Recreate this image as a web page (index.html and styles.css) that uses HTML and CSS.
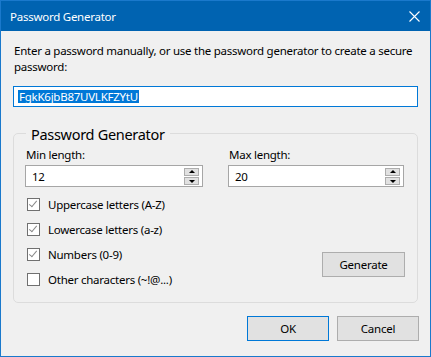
FILE: index.html
```html
<!DOCTYPE html>
<html lang="en">
<head>
    <meta charset="UTF-8">
    <title>Password Generator</title>
    <link rel="stylesheet" href="styles.css">
</head>
<body>
    <div id="window">
        <div id="titlebar">
            <span class="title">Password Generator</span>
            <svg class="close" width="11" height="11" viewBox="0 0 11 11">
                <path d="M0.5 0.5 L10.5 10.5 M10.5 0.5 L0.5 10.5" stroke="#ffffff" stroke-width="1.1" fill="none"/>
            </svg>
        </div>
        <div id="content">
            <p class="intro">Enter a password manually, or use the password generator to create a secure password:</p>
            <div class="pwd-input"><span class="selected">FgkK6jbB87UVLKFZYtU</span></div>

            <fieldset class="group">
                <legend>Password Generator</legend>
                <div class="lengths">
                    <div class="field">
                        <label>Min length:</label>
                        <div class="spin">
                            <span class="value">12</span>
                            <div class="arrows">
                                <span class="arrow up"></span>
                                <span class="arrow down"></span>
                            </div>
                        </div>
                    </div>
                    <div class="field">
                        <label>Max length:</label>
                        <div class="spin">
                            <span class="value">20</span>
                            <div class="arrows">
                                <span class="arrow up"></span>
                                <span class="arrow down"></span>
                            </div>
                        </div>
                    </div>
                </div>
                <div class="options">
                    <div class="checks">
                        <div class="check"><span class="box checked"></span>Uppercase letters (A-Z)</div>
                        <div class="check"><span class="box checked"></span>Lowercase letters (a-z)</div>
                        <div class="check"><span class="box checked"></span>Numbers (0-9)</div>
                        <div class="check"><span class="box"></span>Other characters (~!@...)</div>
                    </div>
                    <button class="btn generate">Generate</button>
                </div>
            </fieldset>

            <div class="actions">
                <button class="btn default">OK</button>
                <button class="btn">Cancel</button>
            </div>
        </div>
    </div>
</body>
</html>
```

FILE: styles.css
```css
body, html {
    margin: 0;
    padding: 0;
    background-color: #f0f0f0;
    font-family: "Noto Sans", Arial, sans-serif;
    font-size: 11.5px;
    letter-spacing: -0.25px;
    color: #000000;
}
#window {
    width: 429px;
    height: 355px;
    border: 1px solid #1a79cc;
    background-color: #f0f0f0;
    display: flex;
    flex-direction: column;
}
#titlebar {
    height: 30px;
    background-color: #0063b1;
    color: #ffffff;
    display: flex;
    align-items: center;
    justify-content: space-between;
    padding: 0 10px 0 9px;
}
#titlebar .title {
    margin-top: 1px;
}
#content {
    padding: 12px 12px 0 12px;
}
.intro {
    margin: 0;
    line-height: 16px;
    padding-left: 1px;
}
.pwd-input {
    margin-top: 11px;
    height: 19px;
    border: 1px solid #0078d7;
    background-color: #ffffff;
    padding-left: 4px;
    display: flex;
    align-items: center;
}
.selected {
    background-color: #0078d7;
    color: #ffffff;
    line-height: 13px;
    padding: 0 1px;
}
.group {
    margin: 17px 0 0 0;
    border: 1px solid #dcdcdc;
    border-radius: 5px;
    padding: 0 12px 16px 11px;
    box-sizing: border-box;
    height: 179px;
}
.group legend {
    font-size: 14.5px;
    letter-spacing: -0.3px;
    padding: 0 5px;
    margin-left: 1px;
    line-height: 18px;
    position: relative;
    top: 1px;
}
.lengths {
    display: grid;
    grid-template-columns: 178px 176px;
    column-gap: 25px;
    margin-top: 5px;
}
.field label {
    display: block;
    line-height: 16px;
    padding-left: 1px;
    margin-bottom: 2px;
}
.spin {
    height: 20px;
    border: 1px solid #a6a6a6;
    background-color: #ffffff;
    display: flex;
    align-items: center;
    justify-content: space-between;
    padding: 0 3px 0 6px;
}
.arrows {
    display: flex;
    flex-direction: column;
    gap: 1px;
}
.arrow {
    width: 13px;
    height: 6px;
    border: 1px solid #adadad;
    background-color: #e1e1e1;
    position: relative;
}
.arrow::after {
    content: "";
    position: absolute;
    left: 4px;
    width: 0;
    height: 0;
    border-left: 3px solid transparent;
    border-right: 3px solid transparent;
}
.arrow.up::after {
    top: 1px;
    border-bottom: 3px solid #000000;
}
.arrow.down::after {
    top: 2px;
    border-top: 3px solid #000000;
}
.options {
    display: flex;
    justify-content: space-between;
    align-items: flex-end;
    margin-top: 11px;
}
.check {
    display: flex;
    align-items: center;
    height: 13px;
    margin-bottom: 12px;
    padding-left: 2px;
}
.check:last-child {
    margin-bottom: 0;
}
.box {
    width: 11px;
    height: 11px;
    border: 1px solid #707070;
    background-color: #ffffff;
    margin-right: 8px;
    position: relative;
}
.box.checked::after {
    content: "";
    position: absolute;
    left: 3px;
    top: 0px;
    width: 3px;
    height: 7px;
    border-right: 1.5px solid #888888;
    border-bottom: 1.5px solid #888888;
    transform: rotate(40deg);
}
.btn {
    font-family: "Noto Sans", Arial, sans-serif;
    font-size: 11.5px;
    letter-spacing: -0.25px;
    background-color: #e1e1e1;
    border: 1px solid #adadad;
    height: 25px;
    padding: 0;
    color: #000000;
}
.generate {
    width: 83px;
    margin-bottom: 9px;
}
.actions {
    display: flex;
    justify-content: flex-end;
    gap: 8px;
    margin-top: 13px;
    margin-right: -1px;
}
.actions .btn {
    width: 82px;
}
.actions .btn.default {
    border-color: #0078d7;
}
```
